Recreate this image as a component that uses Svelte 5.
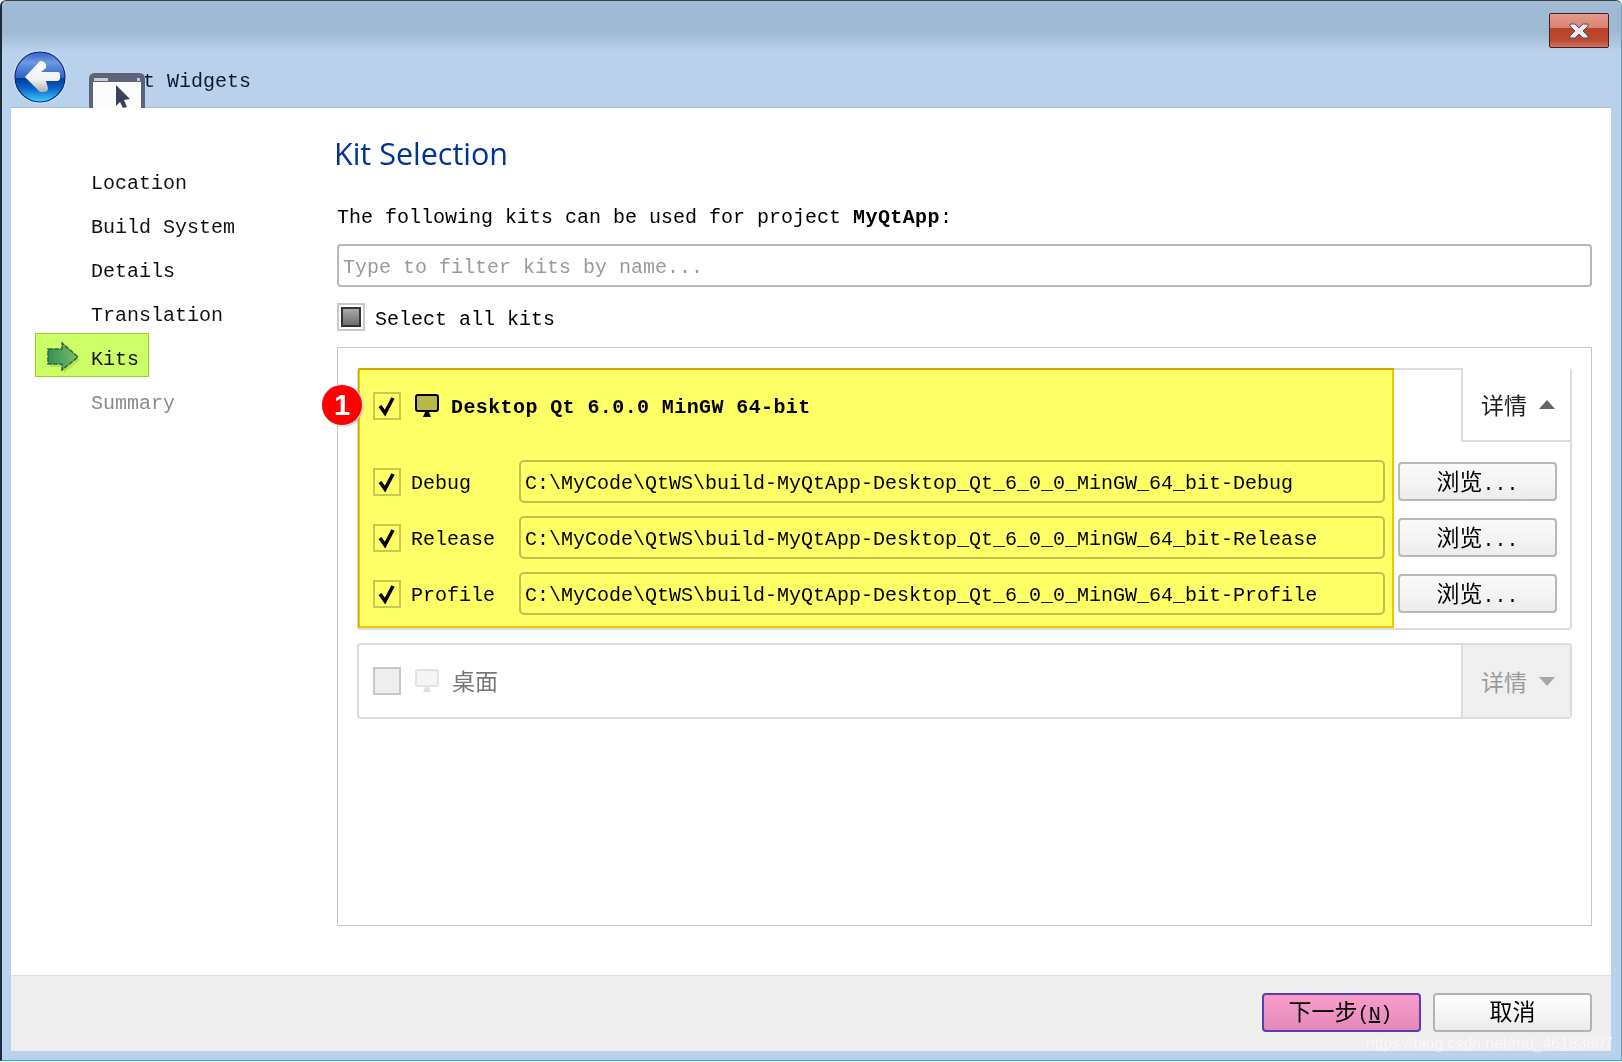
<script>
  // Qt Creator "Kit Selection" wizard page, with the annotation overlay on the first kit.
  const steps = [
    { name: "Location" },
    { name: "Build System" },
    { name: "Details" },
    { name: "Translation" },
    { name: "Kits", current: true },
    { name: "Summary", pending: true },
  ];
  const prefix = "C:\\MyCode\\QtWS\\build-MyQtApp-Desktop_Qt_6_0_0_MinGW_64_bit-";
  const builds = ["Debug", "Release", "Profile"];
</script>

<div class="window">
  <header class="titlebar">
    <svg class="back" viewBox="0 0 54 54" width="54" height="54">
      <defs>
        <linearGradient id="backFill" x1="0" y1="0" x2="0" y2="1">
          <stop offset="0" stop-color="#2f62c4" />
          <stop offset="0.2" stop-color="#6f9ae0" />
          <stop offset="0.52" stop-color="#2a62c6" />
          <stop offset="0.53" stop-color="#063a9c" />
          <stop offset="0.72" stop-color="#0a62c8" />
          <stop offset="1" stop-color="#3cd0fa" />
        </linearGradient>
        <linearGradient id="backArrow" x1="0" y1="0" x2="0" y2="1">
          <stop offset="0" stop-color="#ffffff" />
          <stop offset="0.6" stop-color="#f2f2f2" />
          <stop offset="1" stop-color="#b0b0b0" />
        </linearGradient>
      </defs>
      <circle cx="27" cy="27" r="27" fill="#d4deea" opacity="0.75" />
      <circle cx="27" cy="27" r="25" fill="url(#backFill)" stroke="#0c2c84" stroke-width="1.2" />
      <path d="M27 11 Q32 11 33 15 L33 18 L28 22 L45 22 Q47 22 47 25 L47 28 Q47 31 44 31 L33 31 L35 38 Q35 42 31 42 L27 42 L12 27 Z" fill="url(#backArrow)" />
    </svg>
    <span class="wizard-title">Qt Widgets</span>
    <svg class="wizard-icon" viewBox="0 0 56 35" width="56" height="35">
      <path d="M0 35 V6 Q0 0 6 0 H50 Q56 0 56 6 V35 Z" fill="#5d6478" />
      <rect x="4" y="9" width="48" height="26" fill="#fbfbfb" />
      <rect x="5" y="5" width="14" height="3" fill="#c9ccd4" />
      <rect x="48" y="5" width="3" height="3" fill="#c9ccd4" />
      <path d="M27 12 L41 26 L35 27 L38 34 L34 35 L31 29 L27 33 Z" fill="#3c4258" />
    </svg>
    <div class="close">
      <svg viewBox="0 0 20 16" width="20" height="16">
        <path d="M1 1 H6 L10 5 L14 1 H19 V3 L14 8 L19 13 V15 H14 L10 11 L6 15 H1 V13 L6 8 L1 3 Z" fill="#ececec" stroke="#4c5464" stroke-width="1" />
      </svg>
    </div>
  </header>

  <div class="client">
    <div class="body">
      <nav class="steps">
        {#each steps as s}
          <div class="step" class:current={s.current} class:pending={s.pending}>
            {#if s.current}
              <svg class="step-arrow" viewBox="0 0 34 32" width="34" height="32">
                <defs>
                  <linearGradient id="arrowFill" x1="0" y1="0" x2="1" y2="0">
                    <stop offset="0" stop-color="#2f8f5c" />
                    <stop offset="1" stop-color="#7fbf62" />
                  </linearGradient>
                </defs>
                <path d="M3 10 H17 V4 L33 18 L17 31 V25 H3 Z" fill="#a8d850" opacity="0.7" />
                <path d="M1 7 H15 V1 L31 15 L15 28 V22 H1 Z" fill="url(#arrowFill)" stroke="#2f6a40" stroke-width="1.5" stroke-dasharray="5 1" />
              </svg>
            {/if}
            {s.name}
          </div>
        {/each}
      </nav>

      <main class="page">
        <h1>Kit Selection</h1>
        <p class="intro">The following kits can be used for project <b>MyQtApp</b>:</p>
        <div class="filter">Type to filter kits by name...</div>
        <div class="select-all">
          <span class="check partial"><i></i></span>
          <span class="select-label">Select all kits</span>
        </div>

        <div class="panel">
          <section class="kit kit-open">
            <div class="kit-head">
              <span class="check">
                <svg viewBox="0 0 24 24" width="24" height="24"><path d="M5 12 L10 19 L18 4" fill="none" stroke="#000" stroke-width="3.6" /></svg>
              </span>
              <svg class="monitor" viewBox="0 0 24 24" width="24" height="24">
                <rect x="1" y="1" width="22" height="16" rx="2" fill="#b8b8b8" stroke="#000" stroke-width="2" />
                <path d="M8 23 L10.5 17 H13.5 L16 23 Z" fill="#000" />
              </svg>
              <span class="kit-name">Desktop Qt 6.0.0 MinGW 64-bit</span>
              <div class="details"><span>详情</span> <span class="tri up"></span></div>
            </div>
            {#each builds as b}
              <div class="build">
                <span class="check">
                  <svg viewBox="0 0 24 24" width="24" height="24"><path d="M5 12 L10 19 L18 4" fill="none" stroke="#000" stroke-width="3.6" /></svg>
                </span>
                <span class="build-name">{b}</span>
                <div class="path">{prefix}{b}</div>
                <div class="browse">浏览<span class="dots">...</span></div>
              </div>
            {/each}
            <div class="marker"></div>
            <div class="badge">1</div>
          </section>

          <section class="kit kit-off">
            <span class="check off"></span>
            <svg class="monitor" viewBox="0 0 24 24" width="24" height="24">
              <rect x="1" y="1" width="22" height="16" rx="2" fill="#f4f4f4" stroke="#e2e2e2" stroke-width="2" />
              <path d="M8 23 L10.5 17 H13.5 L16 23 Z" fill="#e2e2e2" />
            </svg>
            <span class="kit-name-off">桌面</span>
            <div class="details off"><span>详情</span> <span class="tri down"></span></div>
          </section>
        </div>
      </main>
    </div>

    <footer class="footer">
      <div class="btn next">下一步<span class="mnemonic">(<u>N</u>)</span></div>
      <div class="btn">取消</div>
    </footer>
  </div>

  <div class="watermark">https://blog.csdn.net/m0_46183807</div>
</div>

<style>
  :global(body) { margin: 0; background: #fff; }
  .window {
    position: relative; width: 1622px; height: 1061px; box-sizing: border-box;
    display: flex; flex-direction: column; overflow: hidden;
    background: #b9d1ea; border-top: 1px solid #3c3c3c; border-bottom: 1px solid #1cb4cc;
    border-left: 2px solid #1c2c3c; border-right: 1px solid #5f9fc0; border-radius: 6px 6px 0 0;
    font-family: "Liberation Mono", "Noto Sans CJK SC", monospace; font-size: 20px; color: #000;
  }
  .titlebar {
    position: relative; flex: none; height: 106px; box-sizing: border-box;
    background: linear-gradient(#a0bad4 0, #a0bad4 32px, #b9d1ea 50px);
  }
  .back { position: absolute; left: 11px; top: 49px; }
  .wizard-title { position: absolute; left: 129px; top: 69px; line-height: 24px; color: #0a1a3a; }
  .wizard-icon { position: absolute; left: 87px; top: 72px; }
  .close {
    position: absolute; right: 12px; top: 12px; width: 60px; height: 35px; box-sizing: border-box;
    display: flex; align-items: center; justify-content: center;
    border: 1px solid #4a1a28; border-radius: 2px;
    background: linear-gradient(#e49a8a 0, #d88272 42%, #b8432a 43%, #bc4a30 80%, #d07460 100%);
  }

  .client {
    flex: 1; display: flex; flex-direction: column; min-height: 0;
    margin: 0 10px 9px 9px; background: #fff; border-top: 1px solid #a6c0dc;
  }
  .body { flex: 1; display: flex; min-height: 0; }
  .steps { flex: none; width: 326px; padding-top: 54px; box-sizing: border-box; }
  .step { height: 44px; line-height: 44px; padding-left: 80px; color: #111; }
  .step.pending { color: #8a8a8a; }
  .step.current {
    position: relative; box-sizing: border-box; width: 114px; margin: -5px 0 5px 24px; padding: 6px 0 0 55px; height: 44px; line-height: 40px;
    background: #ccff66; border: 1px solid #9ccc34;
  }
  .step-arrow { position: absolute; left: 11px; top: 8px; }

  .page { flex: 1; min-width: 0; padding-right: 19px; }
  h1 { margin: 23px 0 0 -3px; font: 400 30.5px/44px "Open Sans", "Noto Sans", sans-serif; color: #003399; }
  .intro { margin: 31px 0 0; line-height: 24px; }
  .intro b { letter-spacing: 0.4px; }
  .filter {
    margin-top: 14px; height: 43px; box-sizing: border-box; padding: 2px 0 0 4px; line-height: 39px;
    border: 2px solid #b8b8b8; border-radius: 4px; color: #9a9a9a;
  }
  .select-all { margin-top: 16px; height: 28px; display: flex; align-items: center; gap: 10px; }
  .select-label { padding-top: 4px; }

  .check {
    flex: none; width: 28px; height: 28px; box-sizing: border-box; display: flex; align-items: center; justify-content: center;
    border: 2.5px solid #c8c8c8; background: #fff;
  }
  .check.partial i {
    display: block; width: 20px; height: 20px; box-sizing: border-box; border: 2px solid #333;
    background: linear-gradient(#a8a8a8, #707070);
  }
  .check.off { background: #eee; }

  .panel {
    margin-top: 16px; height: 579px; box-sizing: border-box; padding: 20px 19px 0;
    border: 1px solid #c8c8c8; display: flex; flex-direction: column; gap: 13px;
  }
  .kit { position: relative; box-sizing: border-box; border: 2px solid #dcdcdc; border-radius: 4px; background: #fff; }
  .kit-open { height: 262px; }
  .kit-head { position: relative; height: 72px; display: flex; align-items: center; padding-left: 14px; }
  .monitor { flex: none; margin-left: 14px; }
  .kit-name { margin: 2px 0 0 12px; font-weight: 700; letter-spacing: 0.4px; }
  .details {
    position: absolute; right: 0; top: -2px; width: 109px; height: 74px; box-sizing: border-box; padding-left: 18px;
    display: flex; align-items: center; gap: 12px; font-size: 23px; color: #222;
    border-left: 2px solid #dcdcdc; border-bottom: 2px solid #dcdcdc; background: #fff;
  }
  .details.off { top: 0; height: 72px; border-bottom: 0; background: #efefef; color: #9a9a9a; }
  .tri { width: 0; height: 0; border-left: 8px solid transparent; border-right: 8px solid transparent; }
  .tri.up { border-bottom: 9px solid #666; }
  .tri.down { border-top: 9px solid #a6a6a6; }

  .build { display: flex; align-items: center; height: 43px; margin: 0 13px 13px 14px; }
  .kit-head + .build { margin-top: 18px; }
  .build-name { flex: none; width: 108px; margin-left: 10px; padding-top: 4px; }
  .path {
    flex: 1; min-width: 0; height: 43px; box-sizing: border-box; padding-left: 4px; line-height: 43px; white-space: nowrap;
    border: 2px solid #c0c0c0; border-radius: 5px;
  }
  .browse {
    flex: none; width: 159px; height: 39px; margin-left: 13px; box-sizing: border-box; line-height: 40px; text-align: center; font-size: 23px;
    border: 2px solid #b8b8b8; border-radius: 4px; background: linear-gradient(#fbfbfb, #ececec);
  }
  .dots { font-size: 20px; }
  .marker {
    position: absolute; left: -1px; top: -2px; width: 1036px; height: 260px; box-sizing: border-box;
    background: #ffff66; mix-blend-mode: multiply; border: 2px solid #f5c400; pointer-events: none;
  }
  .badge {
    position: absolute; left: -37px; top: 15px; width: 40px; height: 40px; border-radius: 50%;
    background: #fe0000; box-shadow: 0 0 0 1px #e8e8e8, 1px 1px 2px #999;
    color: #fff; font: 700 29px/40px "Liberation Sans", sans-serif; text-align: center;
  }

  .kit-off { height: 76px; display: flex; align-items: center; padding-left: 14px; }
  .kit-name-off { margin: -2px 0 0 13px; font-size: 23px; color: #777; }

  .footer {
    flex: none; height: 76px; box-sizing: border-box; padding: 17px 19px 0 0;
    display: flex; justify-content: flex-end; gap: 12px;
    background: #eee; border-top: 1px solid #dfdfdf;
  }
  .btn {
    width: 159px; height: 39px; box-sizing: border-box; text-align: center; line-height: 39px; font-size: 23px;
    border: 2px solid #b4b4b4; border-radius: 4px; background: linear-gradient(#fff, #ececec);
  }
  .btn.next { border-color: #5a3eb0; background: linear-gradient(#fb9ccb, #e28ab9); padding-right: 3px; }
  .mnemonic { font-size: 20px; letter-spacing: -0.7px; }
  .watermark {
    position: absolute; left: 1364px; top: 1033px; white-space: nowrap;
    font: 15.8px/20px "Liberation Sans", sans-serif; color: rgba(255, 255, 255, 0.5);
  }
</style>
